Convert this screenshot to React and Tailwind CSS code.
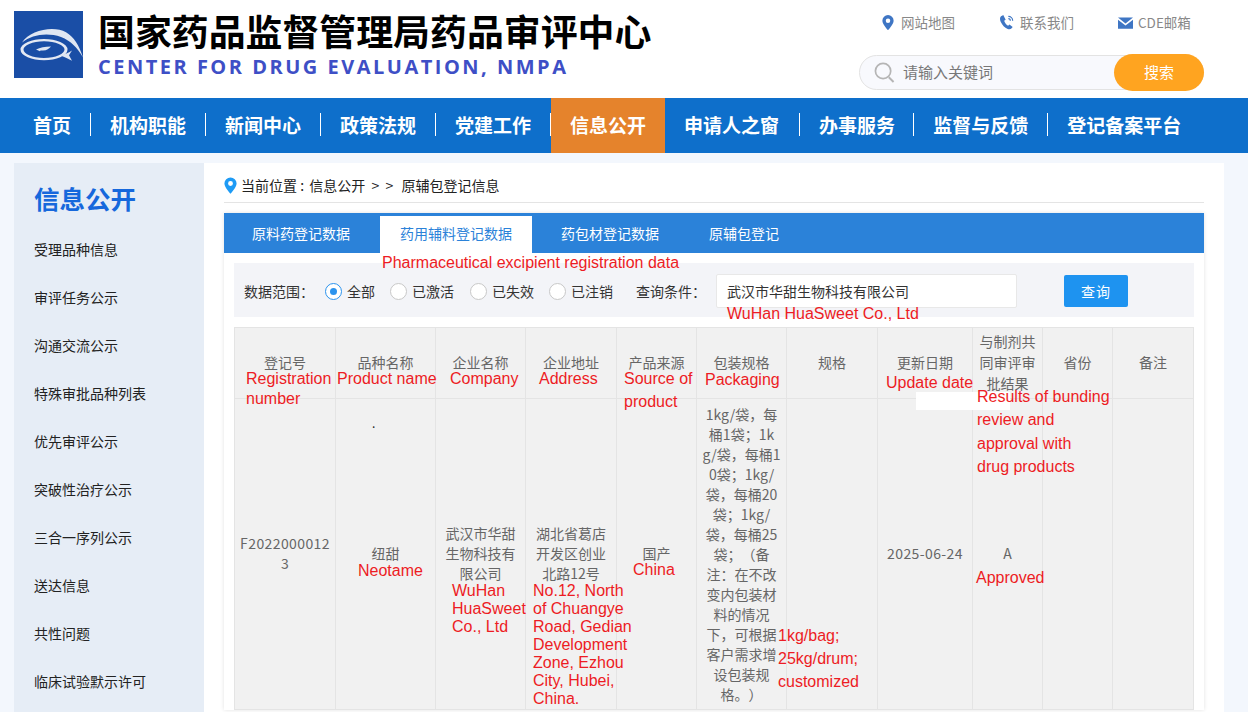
const sans = "font-['Noto_Sans_CJK_SC','Noto_Sans',sans-serif]";

const navItems = ["首页", "机构职能", "新闻中心", "政策法规", "党建工作", "信息公开", "申请人之窗", "办事服务", "监督与反馈", "登记备案平台"];
const sideItems = ["受理品种信息", "审评任务公示", "沟通交流公示", "特殊审批品种列表", "优先审评公示", "突破性治疗公示", "三合一序列公示", "送达信息", "共性问题", "临床试验默示许可"];
const radios = ["全部", "已激活", "已失效", "已注销"];
const colWidths = ["w-[101px]", "w-[100px]", "w-[90px]", "w-[91px]", "w-[80px]", "w-[90px]", "w-[91px]", "w-[95px]", "w-[70px]", "w-[70px]", "w-[81px]"];
const headers = ["登记号", "品种名称", "企业名称", "企业地址", "产品来源", "包装规格", "规格", "更新日期", "与制剂共同审评审批结果", "省份", "备注"];
const packaging = "1kg/袋，每桶1袋；1kg/袋，每桶10袋；1kg/袋，每桶20袋；1kg/袋，每桶25袋；（备注：在不改变内包装材料的情况下，可根据客户需求增设包装规格。）";
const row = ["F20220000123", "纽甜", "武汉市华甜生物科技有限公司", "湖北省葛店开发区创业北路12号", "国产", packaging, "", "2025-06-24", "A", "", ""];

const notes = [
  ["left-[382px] top-[254px]", "Pharmaceutical excipient registration data"],
  ["left-[727px] top-[305px]", "WuHan HuaSweet Co., Ltd"],
  ["left-[246px] top-[370px]", "Registration"],
  ["left-[246px] top-[390px]", "number"],
  ["left-[337px] top-[370px]", "Product name"],
  ["left-[450px] top-[370px]", "Company"],
  ["left-[539px] top-[370px]", "Address"],
  ["left-[624px] top-[370px]", "Source of"],
  ["left-[624px] top-[393px]", "product"],
  ["left-[705px] top-[371px]", "Packaging"],
  ["left-[886px] top-[374px]", "Update date"],
  ["left-[358px] top-[562px]", "Neotame"],
  ["left-[633px] top-[561px]", "China"],
  ["left-[976px] top-[569px]", "Approved"],
];

const PinIcon = ({ className, fill }) => (
  <svg viewBox="0 0 16 20" className={className}>
    <path fillRule="evenodd" fill={fill} d="M8 0a7.5 7.5 0 0 0-7.5 7.5C.5 12.5 8 20 8 20s7.5-7.5 7.5-12.5A7.5 7.5 0 0 0 8 0Zm0 10.5a3 3 0 1 1 0-6 3 3 0 0 1 0 6Z" />
  </svg>
);

const Logo = () => (
  <svg viewBox="0 0 69 85" className="w-[69px] h-[67px] shrink-0" preserveAspectRatio="none">
    <rect width="69" height="85" fill="#1a4ea6" />
    <path d="M8 40C16 24 40 18 52 27c8 6 13 16 17 32-6-13-12-21-22-26C33 27 18 30 8 40Z" fill="#dfe6f2" />
    <ellipse cx="30" cy="49" rx="22" ry="12" fill="none" stroke="#e4e9f3" strokeWidth="3" />
    <path d="M46 56c5-1 8-3 12-6l-3 6 3 7c-4-3-8-5-12-7Z" fill="#dfe6f2" />
    <path d="M22 49c4-3 9-4 15-4-2 3-4 5-8 5-2 0-3 0-3 1l-4-2Z" fill="#dfe6f2" />
  </svg>
);

const Header = () => (
  <div className="h-[98px] bg-white flex justify-between pl-[14px] pr-[44px]">
    <div className="flex gap-[15px] pt-[11px]">
      <Logo />
      <div>
        <div className="text-[36.900px] leading-[38px] font-bold text-black whitespace-nowrap">国家药品监督管理局药品审评中心</div>
        <div className="mt-[6px] text-[20px] leading-[24px] font-bold text-[#3e4fc6] tracking-[2.500px] whitespace-nowrap font-['Open_Sans',sans-serif]">CENTER FOR DRUG EVALUATION, NMPA</div>
      </div>
    </div>
    <div className="w-[345px] pt-[13px]">
      <div className="flex text-[13.500px] leading-[18px] text-[#888] pl-[23px] h-[18px]">
        <div className="w-[117px] flex items-center gap-[7px]">
          <PinIcon className="w-[12px] h-[15px]" fill="#3f76c4" />
          网站地图
        </div>
        <div className="w-[119px] flex items-center gap-[5px]">
          <svg viewBox="0 0 24 24" className="w-[16px] h-[16px]" fill="#3f76c4">
            <path d="M6.6 1.5 3 3.5C1.2 5 1 8 2.5 11.5c2.300 5 6 9 10.500 11 2.500 1 4.500.5 6-1l1.500-2-4.800-3.800-2 1.800c-2.500-1.200-5-4.500-6-7.500l2.300-1.500-3.400-6.500Z" />
            <path d="M14 3.500a6.500 6.500 0 0 1 6.500 6.500M14 7a3 3 0 0 1 3 3" fill="none" stroke="#3f76c4" strokeWidth="1.800" />
          </svg>
          联系我们
        </div>
        <div className="flex items-center gap-[5px]">
          <svg viewBox="0 0 16 12" className="w-[15px] h-[12px] mt-[2px]">
            <path fill="#3f76c4" d="M0 0h16L8 6.500 0 0Zm0 2.500 8 6.200 8-6.200V12H0V2.500Z" />
          </svg>
          CDE邮箱
        </div>
      </div>
      <div className="mt-[24px] relative h-[35px] w-[345px] rounded-full border border-[#e3e3e3] bg-[#f8f9fd] flex items-center pl-[14px]">
        <svg viewBox="0 0 22 22" className="w-[21px] h-[21px]" fill="none" stroke="#b5b5b5">
          <circle cx="9.500" cy="9.500" r="8" strokeWidth="1.800" />
          <path d="m15.500 16 5 5" strokeWidth="2" />
        </svg>
        <span className="ml-[8px] text-[15px] text-[#777]">请输入关键词</span>
        <div className="absolute -right-px -top-[2px] w-[90px] h-[37px] rounded-full bg-[#ffa420] text-white text-[15px] flex items-center justify-center">搜索</div>
      </div>
    </div>
  </div>
);

const Nav = () => (
  <div className="h-[55px] bg-[#0e6fcb] flex pl-[14px]">
    {navItems.map((item, i) => (
      <div key={item} className={`h-full flex items-center pb-[2px] ${i === 5 ? "bg-[#e5832c]" : ""}`}>
        <span className={`pl-[19px] ${i === 6 ? "pr-[20px]" : i === 7 ? "pr-[18px]" : "pr-[19px]"} text-[19px] leading-[23px] font-bold text-white whitespace-nowrap ${i < 9 && i !== 5 ? "border-r border-white" : ""}`}>{item}</span>
      </div>
    ))}
  </div>
);

const Sidebar = () => (
  <div className="w-[190px] shrink-0 bg-[#e6edf6] pl-[20px]">
    <div className="pt-[17px] text-[25.500px] leading-[36px] font-bold text-[#1668dc]">信息公开</div>
    <div className="mt-[10px]">
      {sideItems.map((item) => (
        <div key={item} className="h-[48px] flex items-center pb-[2px] text-[14px] text-[#222]">{item}</div>
      ))}
    </div>
  </div>
);

const Tabs = () => (
  <div className="h-[40px] bg-[#2b82d9] flex items-end text-[14px] text-white">
    <div className="h-[37px] ml-[28px] flex items-center pb-[2px] whitespace-nowrap">原料药登记数据</div>
    <div className="h-[37px] ml-[30px] px-[20px] bg-white text-[#2b82d9] flex items-center pb-[2px] whitespace-nowrap">药用辅料登记数据</div>
    <div className="h-[37px] ml-[29px] flex items-center pb-[2px] whitespace-nowrap">药包材登记数据</div>
    <div className="h-[37px] ml-[50px] flex items-center pb-[2px] whitespace-nowrap">原辅包登记</div>
  </div>
);

const Filter = () => (
  <div className="mx-[10px] mt-[10px] h-[54px] bg-[#f3f4f8] flex items-center pt-[2px] pl-[10px] text-[14px] text-[#333]">
    <span className="w-[81px] whitespace-nowrap">数据范围：</span>
    {radios.map((r, i) => (
      <div key={r} className={`${i === 1 ? "mr-[16px]" : "mr-[15px]"} flex items-center gap-[5px]`}>
        {i === 0 ? (
          <span className="w-[17px] h-[17px] rounded-full border border-[#2b93ee] bg-white flex items-center justify-center">
            <span className="w-[7px] h-[7px] rounded-full bg-[#2b93ee]" />
          </span>
        ) : (
          <span className="w-[17px] h-[17px] rounded-full border border-[#c8c8c8] bg-white" />
        )}
        {r}
      </div>
    ))}
    <span className="ml-[8px] w-[80px] whitespace-nowrap">查询条件：</span>
    <div className="w-[301px] h-[34px] bg-white border border-[#e8e8e8] rounded-[2px] flex items-center pl-[10px] text-[#333]">武汉市华甜生物科技有限公司</div>
    <div className="ml-[47px] w-[64px] h-[32px] bg-[#1e93f0] rounded-[2px] text-white flex items-center justify-center tracking-[1px]">查询</div>
  </div>
);

const DataTable = () => (
  <div className="mx-[10px] mt-[10px]">
    <table className="w-[960px] table-fixed border-collapse bg-[#f1f1f1] text-[#666] text-[14px] leading-[20px] text-center [text-spacing-trim:space-all]">
      <colgroup>
        {colWidths.map((w, i) => (
          <col key={i} className={w} />
        ))}
      </colgroup>
      <thead>
        <tr className="h-[71px]">
          {headers.map((h) => (
            <th key={h} className="border border-[#e4e4e4] px-[6px] pb-[2px] font-normal leading-[21px]">{h}</th>
          ))}
        </tr>
      </thead>
      <tbody>
        <tr className="h-[311px]">
          {row.map((cell, i) => (
            <td key={i} className={`border border-[#e4e4e4] px-[5px] break-all ${i !== 5 ? "pb-[2px]" : ""} ${i === 0 || i === 7 ? "tracking-[0.400px]" : ""}`}>{cell}</td>
          ))}
        </tr>
      </tbody>
    </table>
  </div>
);

export default function App() {
  return (
    <div className={`relative w-[1248px] h-[712px] overflow-hidden bg-[#f3f7fd] ${sans}`}>
      <Header />
      <Nav />
      <div className="flex pl-[14px] pt-[10px] pr-[24px]">
        <Sidebar />
        <div className="flex-1 h-[560px] bg-white pl-[20px] pr-[20px]">
          <div className="h-[40px] pt-[5px] border-b border-[#e4e4e4] flex items-center gap-[4px] text-[14px] text-[#222]">
            <PinIcon className="w-[13px] h-[17px]" fill="#1e9bf5" />
            <span>当前位置 :&nbsp;<span className="ml-[2px]">信息公开</span>&nbsp;&nbsp;&gt;&nbsp;&nbsp;&gt;&nbsp;&nbsp;<span className="ml-[2px]">原辅包登记信息</span></span>
          </div>
          <div className="mt-[10px] shadow-[0_0_4px_rgba(0,0,0,0.12)]">
            <Tabs />
            <Filter />
            <DataTable />
          </div>
        </div>
      </div>

      {/* 截图上的红色标注 */}
      <div className="absolute left-[916px] top-[392px] w-[94px] h-[18px] bg-white" />
      <div className="absolute left-[372px] top-[414px] text-[12px] text-[#222]">.</div>
      {notes.map(([pos, text]) => (
        <div key={text} className={`absolute ${pos} text-[16px] leading-[18px] text-[#ed1c24] whitespace-nowrap font-['Liberation_Sans',sans-serif]`}>{text}</div>
      ))}
      <div className="absolute left-[977px] top-[385px] text-[16px] leading-[23.400px] text-[#ed1c24] whitespace-nowrap font-['Liberation_Sans',sans-serif]">
        Results of bunding<br />review and<br />approval with<br />drug products
      </div>
      <div className="absolute left-[452px] top-[582px] text-[16px] leading-[18px] text-[#ed1c24] whitespace-nowrap font-['Liberation_Sans',sans-serif]">
        WuHan<br />HuaSweet<br />Co., Ltd
      </div>
      <div className="absolute left-[533px] top-[582px] text-[16px] leading-[18px] text-[#ed1c24] whitespace-nowrap font-['Liberation_Sans',sans-serif]">
        No.12, North<br />of Chuangye<br />Road, Gedian<br />Development<br />Zone, Ezhou<br />City, Hubei,<br />China.
      </div>
      <div className="absolute left-[778px] top-[624px] text-[16px] leading-[23px] text-[#ed1c24] whitespace-nowrap font-['Liberation_Sans',sans-serif]">
        1kg/bag;<br />25kg/drum;<br />customized
      </div>
    </div>
  );
}
